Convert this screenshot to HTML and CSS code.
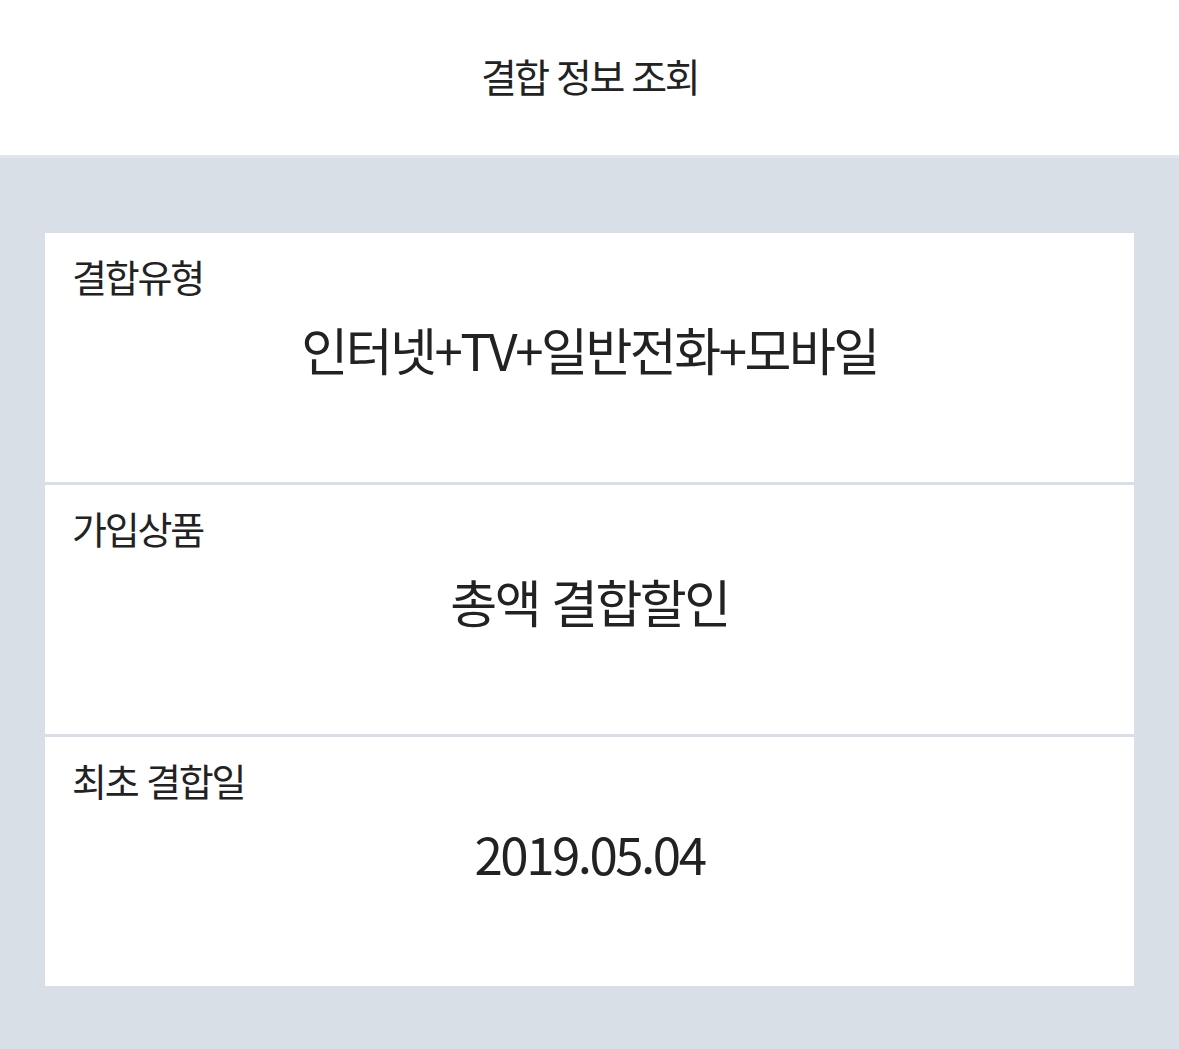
FILE: index.html
```html
<!DOCTYPE html>
<html lang="ko">
<head>
    <meta charset="UTF-8">
    <meta name="viewport" content="width=device-width, initial-scale=1.0">
    <title>결합 정보 조회</title>
    <link rel="stylesheet" href="styles.css">
</head>
<body>
    <header class="top-bar">
        <h1 class="page-title">결합 정보 조회</h1>
    </header>
    <main class="content">
        <section class="info-card">
            <div class="info-row">
                <div class="info-label">결합유형</div>
                <div class="info-value">인터넷+TV+일반전화+모바일</div>
            </div>
            <div class="info-row">
                <div class="info-label">가입상품</div>
                <div class="info-value">총액 결합할인</div>
            </div>
            <div class="info-row">
                <div class="info-label">최초 결합일</div>
                <div class="info-value">2019.05.04</div>
            </div>
        </section>
    </main>
</body>
</html>
```

FILE: styles.css
```css
* {
    margin: 0;
    padding: 0;
    box-sizing: border-box;
}
html, body {
    height: 100%;
}
body {
    font-family: "Noto Sans CJK KR", "Noto Sans", sans-serif;
    color: #222;
    background-color: #d9dfe7;
    display: flex;
    flex-direction: column;
}
.top-bar {
    height: 158px;
    background-color: #fff;
    border-bottom: 3px solid #e3e7ec;
    display: flex;
    justify-content: center;
    padding-top: 48px;
}
.page-title {
    font-size: 39px;
    font-weight: 400;
    letter-spacing: -2.5px;
    line-height: 54px;
}
.content {
    flex: 1;
    padding: 75px 45px 63px;
}
.info-card {
    display: flex;
    flex-direction: column;
    gap: 3px;
}
.info-row {
    height: 249px;
    background-color: #fff;
    padding: 20px 27px 0;
}
.info-label {
    font-size: 38px;
    letter-spacing: -2.2px;
    line-height: 46px;
}
.info-value {
    margin-top: 18px;
    text-align: center;
    font-size: 51px;
    letter-spacing: -2.5px;
    line-height: 64px;
}
```
